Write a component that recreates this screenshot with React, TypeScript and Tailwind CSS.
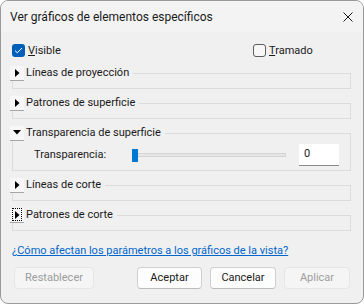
import React from "react";

function Tri({ dir }: { dir: "right" | "down" }) {
  return dir === "right" ? (
    <svg width="5" height="8" viewBox="0 0 5 8"><path d="M0 0 L4.5 4 L0 8 Z" fill="#000" /></svg>
  ) : (
    <svg width="8" height="5" viewBox="0 0 8 5"><path d="M0 0 L8 0 L4 4.5 Z" fill="#000" /></svg>
  );
}

function ExpBtn({ dir, focus }: { dir: "right" | "down"; focus?: boolean }) {
  return (
    <div className="flex h-[15px] w-[14px] items-center justify-center border-b border-[#a6a6a6] bg-[#f7f7f7]">
      {focus ? (
        <div className="flex h-[11px] w-[8px] items-center justify-center outline-1 outline-dotted outline-[#000]">
          <Tri dir={dir} />
        </div>
      ) : (
        <Tri dir={dir} />
      )}
    </div>
  );
}

function Header({ title, dir, focus }: { title: string; dir: "right" | "down"; focus?: boolean }) {
  return (
    <div className="-ml-[3px] -mt-[9px] flex h-[16px] w-fit items-center gap-[2px] bg-[#f0f0f0] pr-[4px]">
      <ExpBtn dir={dir} focus={focus} />
      <span className="leading-[16px]">{title}</span>
    </div>
  );
}

function Group({ title, dir, focus }: { title: string; dir: "right" | "down"; focus?: boolean }) {
  return (
    <div className="flex flex-col border border-[#dcdcdc] pb-[7px]">
      <Header title={title} dir={dir} focus={focus} />
    </div>
  );
}

function Check({ checked }: { checked: boolean }) {
  return checked ? (
    <div className="flex h-[13px] w-[13px] items-center justify-center rounded-[3px] bg-[#005fb8]">
      <svg width="9" height="7" viewBox="0 0 9 7">
        <path d="M1 3.6 L3.3 5.8 L8 1" stroke="#fff" strokeWidth="1" fill="none" />
      </svg>
    </div>
  ) : (
    <div className="h-[13px] w-[13px] rounded-[3px] border border-[#5c5c5c] bg-[#f7f7f7]" />
  );
}

function Btn({ label, disabled, w }: { label: string; disabled?: boolean; w: string }) {
  return (
    <div
      className={
        "flex h-[22px] items-center justify-center rounded-[4px] border " +
        w +
        " " +
        (disabled
          ? "border-[#e6e6e6] bg-[#f5f5f5] text-[#9d9d9d]"
          : "border-[#d0d0d0] border-b-[#bcbcbc] bg-[#fdfdfd] text-[#1a1a1a]")
      }
    >
      {label}
    </div>
  );
}

export default function App() {
  return (
    <div className="flex h-[304px] w-[364px] flex-col overflow-hidden rounded-[8px] border border-[#9a9a9a] bg-[#f0f0f0] font-['Roboto',sans-serif] text-[11px] text-[#1a1a1a]">
      <div className="flex h-[31px] shrink-0 items-center justify-between bg-[#f3f3f3] pl-[9px] pr-[10px]">
        <span className="text-[12px] leading-[16px]">Ver gráficos de elementos específicos</span>
        <svg width="10" height="10" viewBox="0 0 10 10">
          <path d="M0.5 0.5 L9.5 9.5 M9.5 0.5 L0.5 9.5" stroke="#1a1a1a" strokeWidth="1" />
        </svg>
      </div>
      <div className="flex flex-col">
        <div className="mt-[12px] flex h-[13px] items-center pl-[11px]">
          <div className="flex w-[241px] items-center gap-[3px]">
            <Check checked />
            <span className="leading-[16px]">
              <span className="underline">V</span>isible
            </span>
          </div>
          <div className="flex items-center gap-[3px]">
            <Check checked={false} />
            <span className="leading-[16px]">
              <span className="underline">T</span>ramado
            </span>
          </div>
        </div>
        <div className="ml-[11px] mt-[16px] flex w-[339px] flex-col gap-[14px]">
          <Group title="Líneas de proyección" dir="right" />
          <Group title="Patrones de superficie" dir="right" />
          <div className="flex flex-col border border-[#dcdcdc] pb-[4px]">
            <Header title="Transparencia de superficie" dir="down" />
            <div className="mt-[3px] flex h-[22px] items-center pl-[21px] pr-[11px]">
              <span className="w-[98px] leading-[16px]">Transparencia:</span>
              <div className="relative flex h-[13px] w-[154px] items-center">
                <div className="h-[4px] w-full border border-[#d4d4d4] bg-[#e6e6e6]" />
                <div className="absolute left-0 top-0 h-[13px] w-[6px] bg-[#0078d4]" />
              </div>
              <div className="ml-auto flex h-[22px] w-[40px] items-center border-b border-[#8a8a8a] bg-white pl-[5px]">
                0
              </div>
            </div>
          </div>
          <Group title="Líneas de corte" dir="right" />
          <Group title="Patrones de corte" dir="right" focus />
        </div>
        <div className="ml-[11px] mt-[12px] leading-[16px] text-[#0066cc] underline">
          ¿Cómo afectan los parámetros a los gráficos de la vista?
        </div>
        <div className="mt-[8px] flex items-center pl-[13px]">
          <Btn label="Restablecer" disabled w="w-[80px]" />
          <div className="ml-[43px] flex gap-[8px]">
            <Btn label="Aceptar" w="w-[65px]" />
            <Btn label="Cancelar" w="w-[66px]" />
            <Btn label="Aplicar" disabled w="w-[66px]" />
          </div>
        </div>
      </div>
    </div>
  );
}
